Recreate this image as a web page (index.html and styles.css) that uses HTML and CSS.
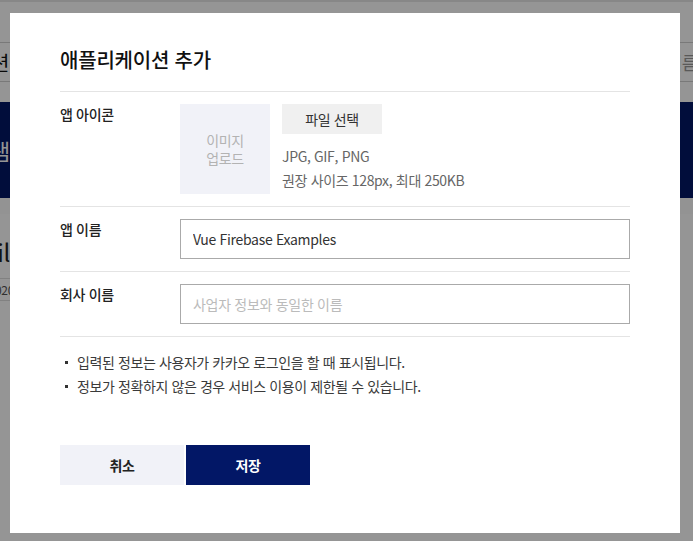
FILE: index.html
```html
<!DOCTYPE html>
<html lang="ko">
<head>
<meta charset="utf-8">
<title>애플리케이션 추가</title>
<link rel="stylesheet" href="styles.css">
</head>
<body>
<div class="page">
  <div class="topbar"></div>
  <div class="header">
    <span class="header-left">애플리케이션</span>
    <span class="header-right">이름</span>
  </div>
  <div class="hero"><span class="hero-text">프로그램</span></div>
  <div class="subband"></div>
  <div class="content">
    <div class="content-title">Vue Firebase Util</div>
    <div class="content-date">2020</div>
  </div>
</div>

<div class="overlay"></div>

<div class="modal" role="dialog">
  <h2 class="modal-title">애플리케이션 추가</h2>

  <div class="form-row">
    <div class="form-label">앱 아이콘</div>
    <div class="form-field icon-field">
      <div class="icon-box"><span>이미지</span><span>업로드</span></div>
      <div class="icon-info">
        <button class="file-btn" type="button">파일 선택</button>
        <p class="icon-desc">JPG, GIF, PNG<br>권장 사이즈 128px, 최대 250KB</p>
      </div>
    </div>
  </div>

  <div class="form-row">
    <div class="form-label">앱 이름</div>
    <div class="form-field">
      <input class="text-input" type="text" value="Vue Firebase Examples">
    </div>
  </div>

  <div class="form-row">
    <div class="form-label">회사 이름</div>
    <div class="form-field">
      <input class="text-input" type="text" placeholder="사업자 정보와 동일한 이름">
    </div>
  </div>

  <ul class="notes">
    <li>입력된 정보는 사용자가 카카오 로그인을 할 때 표시됩니다.</li>
    <li>정보가 정확하지 않은 경우 서비스 이용이 제한될 수 있습니다.</li>
  </ul>

  <div class="actions">
    <button class="btn btn-cancel" type="button">취소</button>
    <button class="btn btn-save" type="button">저장</button>
  </div>
</div>
</body>
</html>
```

FILE: styles.css
```css
* { box-sizing: border-box; }

html, body {
  margin: 0;
  padding: 0;
  height: 100%;
  overflow: hidden;
}

body {
  background: #ffffff;
  font-family: "Noto Sans CJK KR", "Noto Sans", sans-serif;
  color: #333;
  letter-spacing: -0.35px;
}

/* background page */
.page {
  width: 100%;
  overflow: hidden;
}
.topbar {
  height: 2px;
  background: #e8e8e8;
}
.header {
  margin-top: 40px;
  height: 40px;
  border-top: 1px solid #cfcfcf;
  border-bottom: 1px solid #cfcfcf;
  display: flex;
  justify-content: space-between;
  align-items: center;
  font-size: 20px;
  overflow: hidden;
  white-space: nowrap;
}
.header-left {
  flex: none;
  width: 130px;
  margin-left: -121px;
  text-align: right;
  color: #111;
}
.header-right {
  flex: none;
  margin-right: -5px;
  font-size: 18px;
  color: #999;
}
.hero {
  margin-top: 20px;
  height: 96px;
  background: #021766;
  display: flex;
  align-items: center;
  overflow: hidden;
  white-space: nowrap;
}
.hero-text {
  flex: none;
  width: 100px;
  margin-left: -90px;
  text-align: right;
  color: #fff;
  font-size: 22px;
}
.subband {
  height: 16px;
  background: #fbfbfb;
}
.content {
  padding-top: 22px;
  overflow: hidden;
}
.content-title {
  width: 220px;
  margin-left: -210px;
  text-align: right;
  font-size: 24px;
  line-height: 32px;
  color: #222;
  white-space: nowrap;
}
.content-date {
  margin-top: 10px;
  margin-left: -22px;
  width: 40px;
  text-align: right;
  font-size: 12px;
  color: #555;
  border-top: 1px solid #ddd;
  border-bottom: 1px solid #ddd;
  padding: 2px 4px;
}

.overlay {
  position: fixed;
  inset: 0;
  background: rgba(0, 0, 0, 0.416);
}

/* modal */
.modal {
  position: fixed;
  left: 10px;
  top: 13px;
  width: 670px;
  height: 520px;
  background: #fff;
  padding: 33px 50px 48px;
}

.modal-title {
  margin: 0;
  font-size: 20px;
  line-height: 28px;
  font-weight: 500;
  letter-spacing: -0.2px;
  color: #111;
  padding-bottom: 17px;
  border-bottom: 1px solid #e4e4e4;
}

.form-row {
  display: flex;
  padding: 12px 0;
  border-bottom: 1px solid #e4e4e4;
}
.form-label {
  width: 120px;
  flex: none;
  font-size: 14px;
  line-height: 20px;
  font-weight: 500;
  color: #222;
}
.form-field {
  flex: 1;
}
.icon-field {
  display: flex;
  gap: 12px;
}
.icon-box {
  width: 90px;
  height: 90px;
  background: #f1f2f8;
  display: flex;
  flex-direction: column;
  align-items: center;
  justify-content: center;
  font-size: 14px;
  line-height: 18px;
  color: #b3b3b3;
}
.icon-info {
  display: flex;
  flex-direction: column;
  align-items: flex-start;
}
.file-btn {
  width: 100px;
  height: 30px;
  border: 0;
  background: #f0f0f0;
  font-family: inherit;
  font-size: 14px;
  letter-spacing: -0.35px;
  color: #333;
  padding: 0;
}
.icon-desc {
  margin: 10px 0 0;
  font-size: 14px;
  line-height: 24px;
  color: #666;
}
.text-input {
  display: block;
  width: 100%;
  height: 40px;
  border: 1px solid #aaaaaa;
  padding: 0 12px;
  font-family: inherit;
  font-size: 14px;
  letter-spacing: -0.3px;
  color: #333;
  outline: none;
}
.text-input::placeholder {
  color: #bbbbbb;
}

.notes {
  list-style: none;
  margin: 0;
  padding: 13px 0 0;
}
.notes li {
  display: flex;
  align-items: center;
  font-size: 14px;
  line-height: 24px;
  letter-spacing: -0.4px;
  color: #3a3a3a;
}
.notes li::before {
  content: "";
  flex: none;
  width: 3px;
  height: 3px;
  background: #333;
  margin-left: 5px;
  margin-right: 9px;
}

.actions {
  display: flex;
  gap: 2px;
  margin-top: 47px;
}
.btn {
  width: 124px;
  height: 40px;
  border: 0;
  padding: 0;
  font-family: inherit;
  font-size: 14px;
  font-weight: 700;
  letter-spacing: -0.35px;
}
.btn-cancel {
  background: #f1f2f8;
  color: #222;
}
.btn-save {
  background: #021766;
  color: #fff;
}
```
